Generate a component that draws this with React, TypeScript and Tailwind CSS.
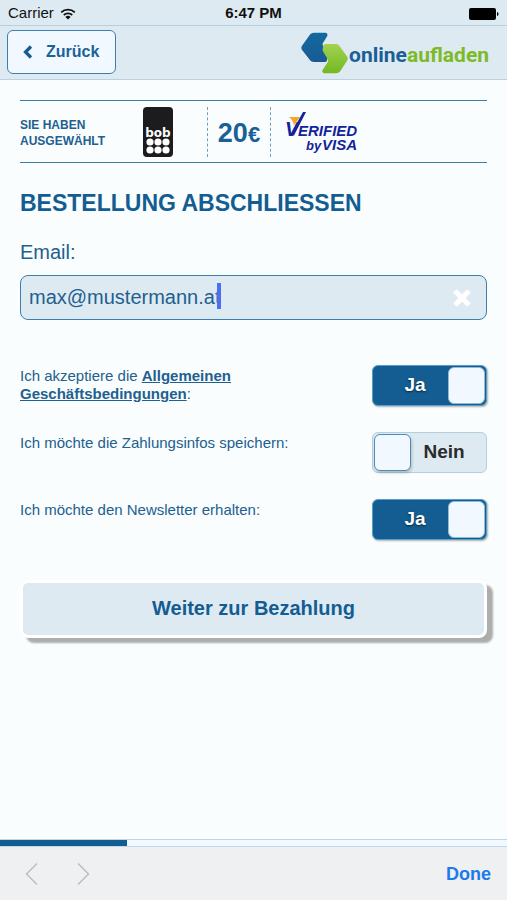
import { ReactNode, useState } from 'react'

interface ToggleRowProps {
  id: string
  label: ReactNode
  checked: boolean
  onChange: (checked: boolean) => void
}

const WifiIcon = () => (
  <svg width="16" height="12" viewBox="0 0 16 12" fill="none" stroke="#111" aria-hidden="true">
    <path d="M1.2 4.4a9.8 9.8 0 0 1 13.6 0" strokeWidth="1.8" />
    <path d="M3.8 7a6.1 6.1 0 0 1 8.4 0" strokeWidth="1.8" />
    <path d="M8 11.6 5.4 9a3.7 3.7 0 0 1 5.2 0z" fill="#111" stroke="none" />
  </svg>
)

const BatteryIcon = () => (
  <svg width="30" height="12" viewBox="0 0 30 12" aria-hidden="true">
    <rect x="0" y="0" width="27" height="12" rx="2" fill="#000" />
    <path d="M28 4c2 .5 2 3.500 0 4z" fill="#000" />
  </svg>
)

const LogoMark = () => (
  <svg width="48" height="42" viewBox="0 0 48 42" aria-hidden="true">
    <defs>
      <linearGradient id="logo-blue" x1="0" y1="0" x2="0" y2="1">
        <stop offset="0" stopColor="#12699f" />
        <stop offset="1" stopColor="#1a5a94" />
      </linearGradient>
      <linearGradient id="logo-green" x1="0" y1="0" x2="0" y2="1">
        <stop offset="0" stopColor="#a2d252" />
        <stop offset="1" stopColor="#74b81f" />
      </linearGradient>
    </defs>
    <path
      d="M13 .8h11c2.400 0 3.200 1.900 2 3.700l-3.900 6.300c-.7 1.100-.6 2.200.1 3.200l4.300 6c.6.900.9 2 .7 3l-1.200 5.600c-.2.900-.8 1.400-1.700 1.400H12.800c-1.700 0-2.900-.6-3.900-1.900L1.100 18c-.9-1.300-1-2.600-.2-4L8.300 3.600C9.500 1.700 11 .8 13 .8z"
      fill="url(#logo-blue)"
    />
    <path
      d="M24.500 12h10c1.700 0 3 .6 4 2l7.600 10.500c.9 1.300.9 2.500.1 3.900l-6.500 10.200c-1.200 1.900-2.600 2.700-4.700 2.700H24c-2.500 0-3.400-1.900-2.100-3.800l4.600-6.900c.9-1.400.9-2.600-.1-4l-4.300-7.200c-.5-.8-.6-1.700-.4-2.700l.7-3c.3-1.100 1-1.700 2.100-1.700z"
      fill="url(#logo-green)"
    />
  </svg>
)

const BobIcon = () => (
  <svg width="30" height="50" viewBox="0 0 30 50" role="img" aria-label="bob">
    <rect x="0" y="0" width="30" height="50" rx="4" fill="#1c1b1d" />
    <text
      x="15"
      y="30"
      textAnchor="middle"
      fontSize="12"
      fontWeight="700"
      fontFamily='"DejaVu Sans", sans-serif'
      fill="#fff"
    >
      bob
    </text>
    {[35, 43].map((cy) =>
      [7, 15, 23].map((cx) => <circle key={`${cx}-${cy}`} cx={cx} cy={cy} r="3.600" fill="#fff" />),
    )}
  </svg>
)

const VerifiedByVisa = () => (
  <svg
    width="77"
    height="42"
    viewBox="-3 0 77 42"
    role="img"
    aria-label="Verified by Visa"
    fontFamily='"Liberation Sans", Arial, sans-serif'
    fontWeight="700"
    fontStyle="italic"
    fill="#14239b"
  >
    <text x="-1" y="25" fontSize="20">V</text>
    <path d="M3 6h11l-6 8.500c-.6-3.600-2.200-6.500-5-8.500z" fill="#f7a823" />
    <path d="m4 25 4-.5L20 1h-3L7 19z" />
    <text x="12" y="25" fontSize="15">ERIFIED</text>
    <text x="20" y="39" fontSize="13">by</text>
    <text x="36" y="39" fontSize="15">VISA</text>
  </svg>
)

const ToggleRow = ({ id, label, checked, onChange }: ToggleRowProps) => (
  <div className="flex items-start justify-between">
    <label htmlFor={id} className="w-[280px] pt-[2px] text-[15px] leading-[18px]">
      {label}
    </label>
    <div
      className={`relative flex h-[41px] w-[115px] shrink-0 items-center rounded-md border px-px font-bold text-[19px] ${
        checked
          ? 'border-[#5b9dc6] bg-[#135d92] text-white shadow-[1px_1px_2px_rgba(0,0,0,0.3)]'
          : 'flex-row-reverse border-[#b5cfde] bg-[#deeaf2] text-[#2b2b2b]'
      }`}
    >
      <span
        className={`flex-1 text-center ${checked ? 'pl-2 [text-shadow:0_1px_2px_rgba(0,0,0,0.6)]' : 'pr-2'}`}
      >
        {checked ? 'Ja' : 'Nein'}
      </span>
      <span
        className={`h-[37px] w-[37px] rounded-md border bg-[#f2f8ff] ${
          checked ? 'border-[#8fbbd8]' : 'border-[#4a8cb9] shadow-[1px_2px_3px_rgba(0,0,0,0.2)]'
        }`}
      />
      <input
        id={id}
        type="checkbox"
        role="switch"
        checked={checked}
        onChange={(e) => onChange(e.target.checked)}
        className="absolute inset-0 h-full w-full cursor-pointer opacity-0"
      />
    </div>
  </div>
)

const App = () => {
  const [email, setEmail] = useState('max@mustermann.at')
  const [terms, setTerms] = useState(true)
  const [savePayment, setSavePayment] = useState(false)
  const [newsletter, setNewsletter] = useState(true)

  return (
    <div className='flex min-h-screen flex-col bg-[#f9fdfd] font-["Liberation_Sans",Arial,sans-serif] text-[#22608f]'>
      {/* Status bar */}
      <div className="grid h-[26px] grid-cols-3 items-center border-b border-[#b4d0e2] bg-[#deeaf2] px-2 pt-[2px] text-[15px] text-[#111]">
        <div className="flex items-center gap-[6px]">
          <span>Carrier</span>
          <WifiIcon />
        </div>
        <span className="text-center font-bold">6:47 PM</span>
        <div className="flex justify-end">
          <BatteryIcon />
        </div>
      </div>

      {/* Header */}
      <header className="flex h-[54px] items-center justify-between border-b border-[#b9d1de] bg-[#deeaf2] pr-[18px] pl-[7px]">
        <button
          type="button"
          className="mb-[2px] flex h-[44px] w-[109px] items-center gap-[13px] rounded-md border border-[#3c7fae] bg-[#f2f8ff] pl-[14px] text-[16px] font-bold text-[#1a6298]"
        >
          <svg width="11" height="14" viewBox="0 0 11 14" fill="none" aria-hidden="true">
            <path d="M9 1.500 3.500 7 9 12.500" stroke="#135d92" strokeWidth="3.200" />
          </svg>
          Zurück
        </button>
        <a href="#" className="flex items-center">
          <LogoMark />
          <span className="pt-[5px] font-[Roboto,sans-serif] text-[21px] leading-6 font-bold text-[#1a5f96]">
            online<span className="text-[#7dba28]">aufladen</span>
          </span>
        </a>
      </header>

      <main className="flex-1 px-5 pt-5">
        {/* Selected product */}
        <section className="flex h-[63px] items-center border-y border-[#3c7fae]">
          <p className="w-[123px] pt-[2px] text-[12px] leading-4 font-bold">
            SIE HABEN
            <br />
            AUSGEWÄHLT
          </p>
          <BobIcon />
          <div className="ml-[34px] flex h-[50px] w-[64px] items-center justify-center border-x border-dashed border-[#6f9fc0] pt-[3px] text-[27px] font-bold text-[#1a5f96]">
            <span>
              20<span className="text-[22px]">€</span>
            </span>
          </div>
          <div className="ml-3">
            <VerifiedByVisa />
          </div>
        </section>

        <h1 className="mt-[26px] text-[23px] leading-7 font-bold text-[#135d92]">
          BESTELLUNG ABSCHLIESSEN
        </h1>

        <form onSubmit={(e) => e.preventDefault()}>
          <label htmlFor="email" className="mt-[23px] block text-[20px] leading-6">
            Email:
          </label>
          <div className="relative mt-[11px]">
            <input
              id="email"
              type="email"
              value={email}
              onChange={(e) => setEmail(e.target.value)}
              className="block h-[45px] w-full rounded-lg border border-[#3c7fae] bg-[#deeaf2] pr-12 pl-2 text-[20px] outline-none"
            />
            <span className="absolute top-[8px] left-[197px] h-[26px] w-[4px] bg-[#4a6ff0]" />
            <button
              type="button"
              aria-label="Email löschen"
              onClick={() => setEmail('')}
              className="absolute top-[14px] right-[16px]"
            >
              <svg width="18" height="18" viewBox="0 0 18 18" stroke="#fff" strokeWidth="5">
                <path d="m2 2 14 14M16 2 2 16" />
              </svg>
            </button>
          </div>

          <div className="mt-[45px] flex flex-col gap-[26px]">
            <ToggleRow
              id="terms"
              label={
                <>
                  Ich akzeptiere die{' '}
                  <a href="#" className="font-bold underline">
                    Allgemeinen Geschäftsbedingungen
                  </a>
                  :
                </>
              }
              checked={terms}
              onChange={setTerms}
            />
            <ToggleRow
              id="save-payment"
              label="Ich möchte die Zahlungsinfos speichern:"
              checked={savePayment}
              onChange={setSavePayment}
            />
            <ToggleRow
              id="newsletter"
              label="Ich möchte den Newsletter erhalten:"
              checked={newsletter}
              onChange={setNewsletter}
            />
          </div>

          <button
            type="submit"
            className="mt-[40px] h-[58px] w-full rounded-lg border-3 border-white bg-[#deeaf2] pb-[2px] text-[20px] font-bold text-[#135d92] shadow-[6px_5px_2px_#adadad]"
          >
            Weiter zur Bezahlung
          </button>
        </form>
      </main>

      {/* Progress */}
      <div className="h-[8px] border-y border-[#c3d6e4] bg-[#f2f8ff]">
        <div className="h-full w-1/4 bg-[#135d92]" />
      </div>

      {/* Browser toolbar */}
      <footer className="flex h-[53px] items-center justify-between bg-[#eef0f2] px-4">
        <div className="flex gap-[30px] pl-2">
          <button type="button" aria-label="Zurück">
            <svg width="22" height="24" viewBox="0 0 22 24" fill="none" stroke="#bcbec0" strokeWidth="1.500">
              <path d="M13 1.500 2.500 12 13 22.500" />
            </svg>
          </button>
          <button type="button" aria-label="Vorwärts">
            <svg width="22" height="24" viewBox="0 0 22 24" fill="none" stroke="#bcbec0" strokeWidth="1.500">
              <path d="M2 1.500 12.500 12 2 22.500" />
            </svg>
          </button>
        </div>
        <button type="button" className="pt-[2px] text-[18px] font-bold text-[#2079ea]">
          Done
        </button>
      </footer>
    </div>
  )
}

export default App
